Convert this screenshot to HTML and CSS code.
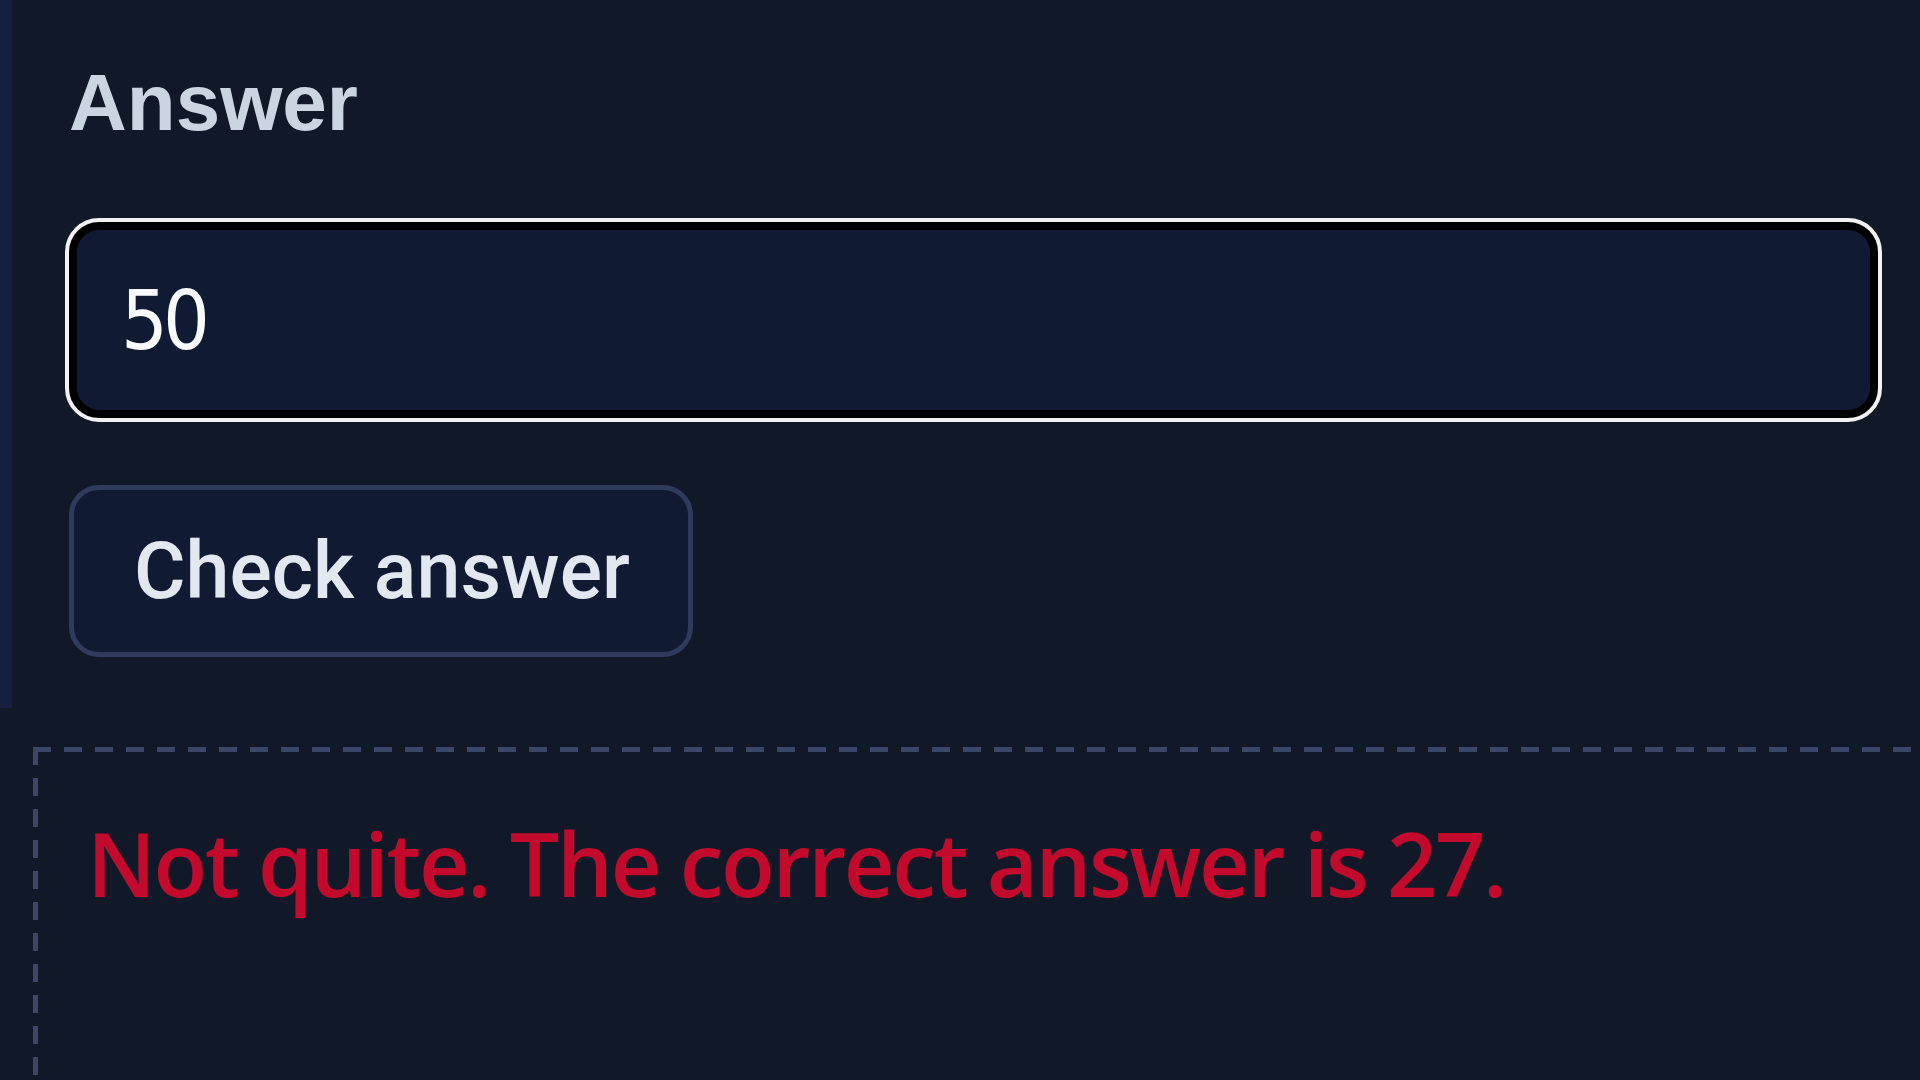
FILE: index.html
```html
<!DOCTYPE html>
<html lang="en">
<head>
<meta charset="utf-8">
<title>Answer</title>
<link rel="stylesheet" href="styles.css">
</head>
<body>
<main class="page">
  <section class="card">
    <label class="label" for="answer">Answer</label>
    <input class="answer-input" id="answer" type="text" value="50">
    <button class="check-btn" type="button">Check answer</button>
  </section>
  <div class="feedback">
    <p class="feedback-text">Not quite. The correct answer is 27.</p>
  </div>
</main>
</body>
</html>
```

FILE: styles.css
```css
* { box-sizing: border-box; }

html, body {
  margin: 0;
  padding: 0;
  background: #111827;
  overflow: hidden;
  width: 1920px;
  height: 1080px;
}

.page {
  display: flex;
  flex-direction: column;
}

.card {
  display: flex;
  flex-direction: column;
  align-items: flex-start;
  border-left: 12px solid #152040;
  padding: 57px 42px 51px 57px;
}

.label {
  font-family: "Liberation Sans", Arial, sans-serif;
  font-weight: 700;
  font-size: 80px;
  line-height: 92px;
  color: #cbd5e1;
}

.answer-input {
  margin-top: 73px;
  width: 100%;
  height: 196px;
  background: #111a33;
  border: 8px solid #000;
  outline: 4px solid #f2f2f2;
  border-radius: 30px;
  padding: 0 0 0 44px;
  font-family: "DejaVu Sans Condensed", "Liberation Sans", sans-serif;
  font-stretch: condensed;
  font-size: 82px;
  letter-spacing: -5px;
  color: #f8fafc;
}

.check-btn {
  margin-top: 67px;
  height: 172px;
  padding: 0 58px 0 60px;
  background: #111a33;
  border: 5px solid #2f3b5c;
  border-radius: 30px;
  font-family: Roboto, "Liberation Sans", sans-serif;
  font-weight: 500;
  font-size: 79px;
  color: #e2e8f0;
}

.feedback {
  margin: 39px -120px 0 33px;
  min-height: 420px;
  padding: 64px 40px 0 54px;
  background-image:
    repeating-linear-gradient(to right, #3a4769 0 18px, transparent 18px 31px),
    repeating-linear-gradient(to bottom, #3a4769 0 18px, transparent 18px 31px);
  background-size: 100% 5px, 5px 100%;
  background-position: 0 0, 0 0;
  background-repeat: no-repeat;
}

.feedback-text {
  margin: 0;
  font-family: "Open Sans", "Noto Sans", sans-serif;
  font-weight: 600;
  font-size: 88px;
  letter-spacing: -2.3px;
  line-height: 1.2;
  color: #c3092c;
}
```
